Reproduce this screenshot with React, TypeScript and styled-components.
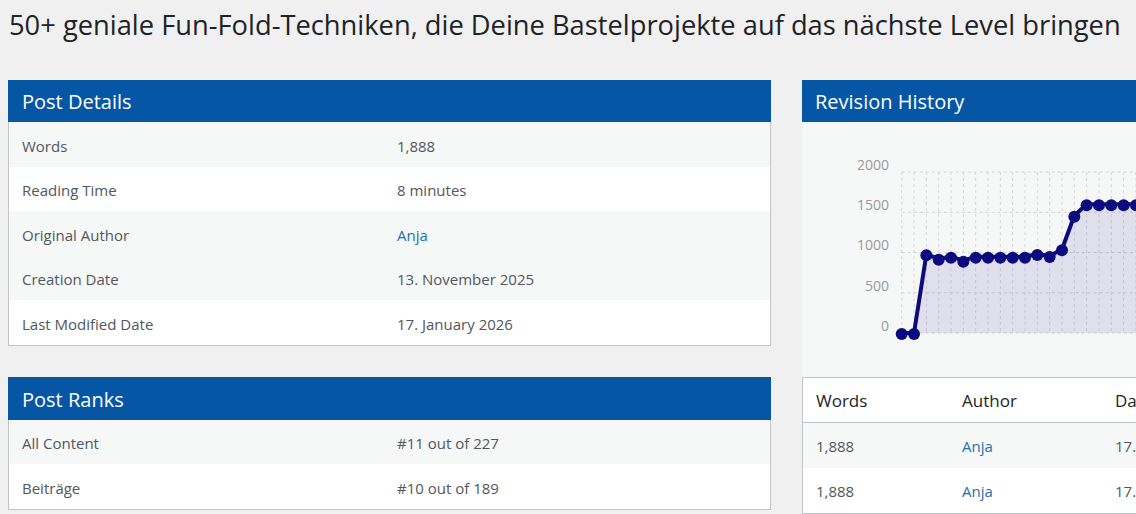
import React from "react";
import styled, { createGlobalStyle } from "styled-components";

const Global = createGlobalStyle`
  html, body { margin: 0; padding: 0; overflow: hidden; }
  body {
    background: #f0f0f1;
    font-family: "Open Sans", "Noto Sans", "Liberation Sans", sans-serif;
    color: #50575e;
  }
`;

const Page = styled.div`
  width: 1600px;
  padding: 0 8px;
  box-sizing: border-box;
`;

const Title = styled.h1`
  margin: 0;
  padding: 9px 0 0 1px;
  font-size: 27.3px;
  line-height: 32px;
  font-weight: 400;
  color: #1d2327;
  white-space: nowrap;
`;

const Columns = styled.div`
  display: flex;
  gap: 31px;
  margin-top: 39px;
  align-items: flex-start;
`;

const Column = styled.div`
  width: 763px;
  flex-shrink: 0;
  display: flex;
  flex-direction: column;
  gap: 31px;
`;

const RightColumn = styled.div`
  width: 763px;
  flex-shrink: 0;
  display: flex;
  flex-direction: column;
`;

const Panel = styled.section`
  background: #fff;
  border: 1px solid #c3c4c7;
  border-top: none;
`;

const PanelHeader = styled.h2<{ $tall?: boolean; $flush?: boolean }>`
  margin: ${(p) => (p.$flush ? "0" : "0 -1px")};
  height: ${(p) => (p.$tall ? "43px" : "42px")};
  background: #0656a6;
  color: #fff;
  font-size: 20px;
  font-weight: 400;
  line-height: ${(p) => (p.$tall ? "45px" : "43px")};
  padding: 0 ${(p) => (p.$flush ? "13px" : "14px")};
`;

const Row = styled.div<{ $alt: boolean }>`
  display: grid;
  grid-template-columns: 375px 1fr;
  align-items: center;
  box-sizing: border-box;
  height: 44.5px;
  padding: 3px 13px 0;
  background: ${(p) => (p.$alt ? "#f6f7f7" : "#fff")};
  font-size: 15px;
  color: #50575e;
`;

const Link = styled.a`
  color: #2271b1;
  text-decoration: none;
`;

const ChartPanel = styled.section`
  display: flex;
  flex-direction: column;
`;

const ChartBody = styled.div`
  height: 255px;
  background: #f6f7f7;
`;

const Table = styled.div`
  background: #fff;
  border: 1px solid #c3c4c7;
`;

const TableRow = styled.div<{ $alt?: boolean; $head?: boolean }>`
  display: grid;
  grid-template-columns: 146px 153px 1fr;
  align-items: center;
  height: ${(p) => (p.$head ? "44px" : "45px")};
  padding-left: 13px;
  background: ${(p) => (p.$alt ? "#f6f7f7" : "#fff")};
  border-bottom: ${(p) => (p.$head ? "1px solid #c3c4c7" : "none")};
  font-size: ${(p) => (p.$head ? "17px" : "15px")};
  color: ${(p) => (p.$head ? "#1d2327" : "#50575e")};
  white-space: nowrap;
`;

const details: [string, string, boolean, boolean][] = [
  ["Words", "1,888", false, true],
  ["Reading Time", "8 minutes", false, false],
  ["Original Author", "Anja", true, true],
  ["Creation Date", "13. November 2025", false, true],
  ["Last Modified Date", "17. January 2026", false, false],
];

const ranks: [string, string][] = [
  ["All Content", "#11 out of 227"],
  ["Beiträge", "#10 out of 189"],
];

const baseValues = [
  0, 0, 978, 923, 948, 898, 948, 948, 948, 948, 948, 981, 957, 1040, 1457,
  1599, 1599, 1599, 1599, 1599,
];
const values = [...baseValues];
while (values.length < 52) {
  const i = values.length;
  values.push(i < 36 ? 1599 : i < 44 ? 1750 : 1888);
}

const X0 = 99.7;
const STEP = 12.33;
const Y0 = 211;
const YTOP = 50;
const yOf = (v: number) => Y0 - (v / 2000) * (Y0 - YTOP);

const Chart: React.FC = () => {
  const pts = values.map((v, i) => [X0 + i * STEP, yOf(v)] as const);
  const line = pts.map((p, i) => `${i ? "L" : "M"}${p[0].toFixed(1)} ${p[1].toFixed(1)}`).join(" ");
  const last = pts[pts.length - 1];
  const area = `${line} L${last[0].toFixed(1)} ${Y0} L${X0} ${Y0} Z`;
  const ticks = [2000, 1500, 1000, 500, 0];
  return (
    <svg width="763" height="255" viewBox="0 0 763 255">
      {ticks.map((t) => (
        <line key={t} x1={X0} x2={last[0]} y1={yOf(t)} y2={yOf(t)} stroke="#d4d4d4" strokeDasharray="3 3" strokeWidth="1" />
      ))}
      {pts.map((p, i) => (
        <line key={i} x1={p[0]} x2={p[0]} y1={YTOP} y2={Y0} stroke="#d8d8d8" strokeDasharray="3 3" strokeWidth="1" />
      ))}
      {ticks.map((t) => (
        <text key={t} x={87} y={yOf(t) - 6} textAnchor="end" dominantBaseline="middle" fontSize="14" fill="#9a9a9a" fontFamily="Open Sans, sans-serif">
          {t}
        </text>
      ))}
      <path d={area} fill="rgba(0,0,128,0.09)" />
      <path d={line} fill="none" stroke="#0b0b7d" strokeWidth="4" strokeLinejoin="round" />
      {pts.map((p, i) => (
        <circle key={i} cx={p[0]} cy={p[1] + 1} r="6" fill="#0b0b7d" />
      ))}
    </svg>
  );
};

export default function App() {
  return (
    <Page>
      <Global />
      <Title>50+ geniale Fun-Fold-Techniken, die Deine Bastelprojekte auf das nächste Level bringen</Title>
      <Columns>
        <Column>
          <Panel>
            <PanelHeader>Post Details</PanelHeader>
            {details.map(([k, v, link, alt]) => (
              <Row key={k} $alt={alt}>
                <span>{k}</span>
                <span>{link ? <Link href="#">{v}</Link> : v}</span>
              </Row>
            ))}
          </Panel>
          <Panel>
            <PanelHeader $tall>Post Ranks</PanelHeader>
            {ranks.map(([k, v], i) => (
              <Row key={k} $alt={i % 2 === 0}>
                <span>{k}</span>
                <span>{v}</span>
              </Row>
            ))}
          </Panel>
        </Column>
        <RightColumn>
          <ChartPanel>
            <PanelHeader $flush>Revision History</PanelHeader>
            <ChartBody>
              <Chart />
            </ChartBody>
          </ChartPanel>
          <Table>
            <TableRow $head>
              <span>Words</span>
              <span>Author</span>
              <span>Date</span>
            </TableRow>
            <TableRow $alt>
              <span>1,888</span>
              <span><Link href="#">Anja</Link></span>
              <span>17. January 2026</span>
            </TableRow>
            <TableRow>
              <span>1,888</span>
              <span><Link href="#">Anja</Link></span>
              <span>17. January 2026</span>
            </TableRow>
          </Table>
        </RightColumn>
      </Columns>
    </Page>
  );
}
